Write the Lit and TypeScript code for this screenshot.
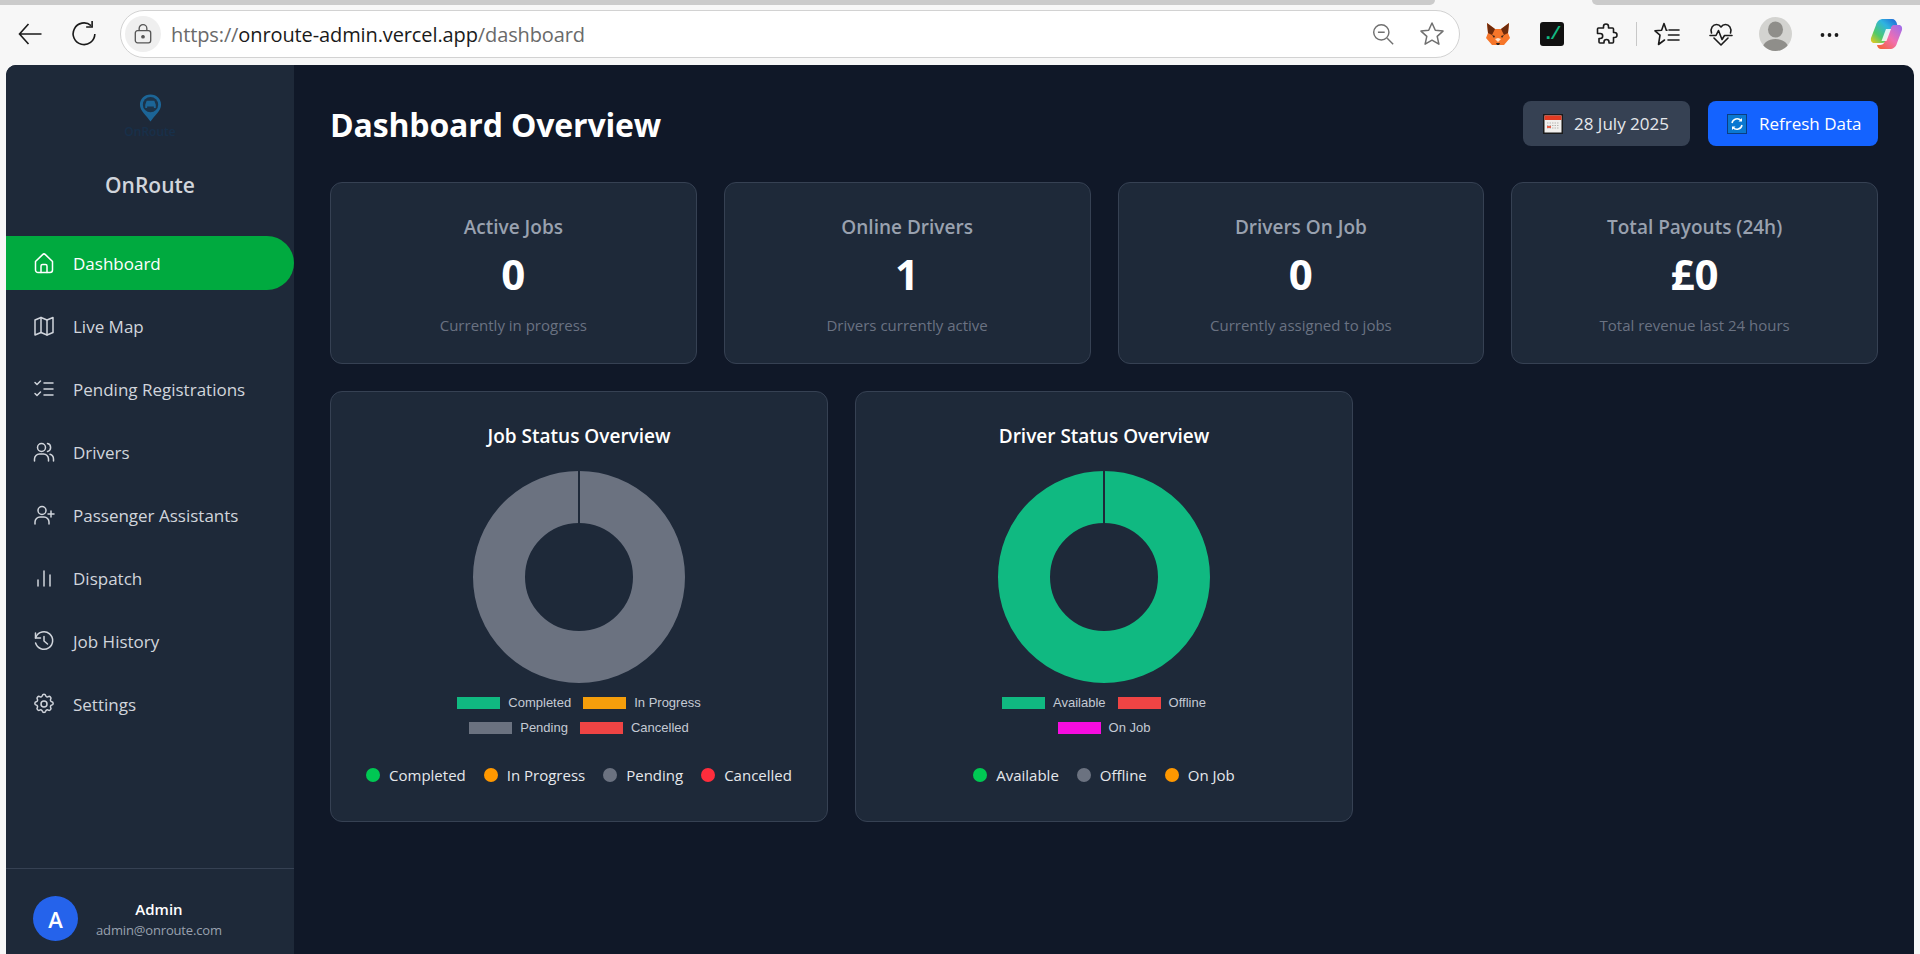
import { LitElement, html, css, svg } from "lit";
import { customElement } from "lit/decorators.js";

const I = (c: unknown, cls = "ni") => html`<svg class=${cls} viewBox="0 0 24 24" fill="none" stroke="currentColor" stroke-width="1.5" stroke-linecap="round" stroke-linejoin="round">${c}</svg>`;

const nav = [
  ["Dashboard", svg`<path d="M3.500 10.500 10.600 3.600a2 2 0 0 1 2.800 0l7.100 6.900V19a2.500 2.500 0 0 1-2.500 2.500H6A2.500 2.500 0 0 1 3.500 19z"/><path d="M9 21.500V15a1.500 1.500 0 0 1 1.500-1.500h3A1.500 1.500 0 0 1 15 15v6.500"/>`],
  ["Live Map", svg`<path d="M3 6l6-2.500 6 2.500 6-2.500v15l-6 2.500-6-2.500-6 2.500z"/><path d="M9 3.500v15M15 6v15"/>`],
  ["Pending Registrations", svg`<path d="M3 5.500l2 2 3.500-3.500M3 16.500l2 2 3.500-3.500M12 6h9M12 12h9M12 18h9"/>`],
  ["Drivers", svg`<circle cx="9.500" cy="7.500" r="4"/><path d="M2.500 21v-2a5 5 0 0 1 5-5h4a5 5 0 0 1 5 5v2"/><path d="M15.500 3.600a4 4 0 0 1 0 7.800M21.500 21v-2a5 5 0 0 0-3.500-4.700"/>`],
  ["Passenger Assistants", svg`<circle cx="10" cy="7.500" r="4"/><path d="M3 21v-2a5 5 0 0 1 5-5h4a5 5 0 0 1 5 5v2"/><path d="M19 8v6M16 11h6"/>`],
  ["Dispatch", svg`<path d="M6 20v-6M12 20V5M18 20v-11"/>`],
  ["Job History", svg`<path d="M3.500 4v5h5"/><path d="M3.600 14a8.700 8.700 0 1 0 .4-6L3.500 9"/><path d="M12 7.500V12l3.500 3"/>`],
  ["Settings", svg`<circle cx="12" cy="12" r="3"/><path d="M10.300 3.600c.4-1.800 3-1.800 3.400 0a1.700 1.700 0 0 0 2.600 1.100c1.500-1 3.400.9 2.400 2.400a1.700 1.700 0 0 0 1.100 2.600c1.800.4 1.800 3 0 3.400a1.700 1.700 0 0 0-1.100 2.600c1 1.500-.9 3.400-2.400 2.400a1.700 1.700 0 0 0-2.600 1.100c-.4 1.800-3 1.800-3.400 0a1.700 1.700 0 0 0-2.600-1.100c-1.500 1-3.400-.9-2.400-2.400a1.700 1.700 0 0 0-1.100-2.600c-1.800-.4-1.800-3 0-3.400a1.700 1.700 0 0 0 1.100-2.600c-1-1.500.9-3.400 2.400-2.400a1.700 1.700 0 0 0 2.600-1.100z"/>`],
] as const;

const stats = [
  ["Active Jobs", "0", "Currently in progress"],
  ["Online Drivers", "1", "Drivers currently active"],
  ["Drivers On Job", "0", "Currently assigned to jobs"],
  ["Total Payouts (24h)", "£0", "Total revenue last 24 hours"],
];

type Row = [string, string];
const charts: { title: string; color: string; rows: Row[][]; dots: Row[] }[] = [
  {
    title: "Job Status Overview",
    color: "#6b7280",
    rows: [
      [["Completed", "#10b981"], ["In Progress", "#f59e0b"]],
      [["Pending", "#6b7280"], ["Cancelled", "#ef4444"]],
    ],
    dots: [["Completed", "#00c853"], ["In Progress", "#ff9800"], ["Pending", "#6b7280"], ["Cancelled", "#ff2d3c"]],
  },
  {
    title: "Driver Status Overview",
    color: "#10b981",
    rows: [
      [["Available", "#10b981"], ["Offline", "#ef4444"]],
      [["On Job", "#f70ce0"]],
    ],
    dots: [["Available", "#00c853"], ["Offline", "#6b7280"], ["On Job", "#ff9800"]],
  },
];

@customElement("app-root")
export class AppRoot extends LitElement {
  static styles = css`
    :host { display: block; height: 954px; overflow: hidden; background: #f7f7f7; font-family: "Open Sans", "Noto Sans", sans-serif; }
    * { box-sizing: border-box; }
    .tabs { height: 5px; background: #f7f7f7; display: flex; justify-content: space-between; }
    .tabs i { display: block; height: 5px; background: #cbcbcb; }
    .tabs i:first-child { width: 1435px; border-bottom-right-radius: 5px; }
    .tabs i:last-child { width: 328px; border-bottom-left-radius: 5px; }
    .bar { height: 60px; display: flex; align-items: center; padding: 0 0 2px 0; color: #1b1b1b; }
    .tb { width: 24px; height: 24px; flex: none; }
    .back { margin-left: 18px; }
    .reload { margin-left: 29px; width: 26px; height: 26px; }
    .url { margin-left: 23px; width: 1340px; height: 48px; border: 1.5px solid #d2d2d2; border-radius: 24px; background: #fff; display: flex; align-items: center; padding: 0 14px 0 4px; flex: none; }
    .lock { width: 36px; height: 36px; border-radius: 50%; background: #efefef; display: flex; align-items: center; justify-content: center; color: #555; flex: none; }
    .lock svg { width: 22px; height: 22px; }
    .addr { margin-left: 10px; font-size: 20px; letter-spacing: -0.11px; color: #1a1a1a; white-space: nowrap; }
    .addr span { color: #6a6a6a; }
    .grow { flex: 1; }
    .zoom { width: 22px; height: 22px; color: #707070; flex: none; }
    .star { width: 26px; height: 26px; color: #707070; flex: none; margin-left: 25px; }
    .exts { display: flex; align-items: center; margin-left: 26px; }
    .fox { width: 24px; height: 24px; flex: none; }
    .term { width: 24px; height: 24px; margin-left: 30px; background: #111; border-radius: 3px; font: 700 19px "Liberation Mono", monospace; letter-spacing: -4px; display: flex; align-items: center; justify-content: center; padding-right: 4px; flex: none; }
    .term em { font-style: normal; color: #12b981; }
    .puzzle { margin-left: 30px; width: 24px; height: 24px; flex: none; }
    .sep { width: 1px; height: 24px; background: #c8c8c8; margin: 0 17px 0 18px; flex: none; }
    .fav { width: 26px; height: 24px; flex: none; }
    .heart { width: 24px; height: 24px; margin-left: 29px; flex: none; }
    .avatar { margin-left: 26px; width: 33px; height: 34px; border-radius: 50%; background: #d3d3d0; overflow: hidden; flex: none; }
    .avatar svg { width: 100%; height: 100%; display: block; }
    .dots { margin-left: 28px; width: 19px; height: 24px; flex: none; }
    .cop { margin-left: 31px; width: 33px; height: 32px; flex: none; }

    .app { margin-left: 6px; margin-right: 6px; height: 889px; background: #101828; border-radius: 10px 10px 0 0; overflow: hidden; display: flex; }
    aside { width: 288px; flex: none; background: #1e2939; display: flex; flex-direction: column; }
    .logo { height: 171px; display: flex; flex-direction: column; align-items: center; padding-top: 28px; flex: none; }
    .logo svg { width: 23px; height: 30px; display: block; flex: none; }
    .logoText { font-size: 12px; font-weight: 600; color: #18304a; margin-top: -1px; height: 19px; line-height: 19px; }
    .brand { margin-top: 30px; font-size: 21px; font-weight: 600; color: #d1d5dc; line-height: 28px; }
    nav { display: flex; flex-direction: column; gap: 9px; flex: 1; }
    .item { height: 54px; width: 288px; display: flex; align-items: center; padding-left: 26px; gap: 17px; color: #d1d5dc; font-size: 17px; border-radius: 0 27px 27px 0; }
    .item.on { background: #00aa3f; color: #fff; }
    .ni { width: 24px; height: 24px; flex: none; }
    .user { height: 86px; border-top: 1px solid #364153; display: flex; align-items: flex-start; padding: 27px 0 0 27px; gap: 18px; flex: none; }
    .uav { width: 45px; height: 45px; border-radius: 50%; background: #2563eb; color: #fff; font-size: 22px; font-weight: 600; display: flex; align-items: center; justify-content: center; flex: none; }
    .uinfo { display: flex; flex-direction: column; align-items: center; margin-top: 3px; }
    .uname { color: #fff; font-size: 15px; font-weight: 600; line-height: 20px; }
    .umail { color: #99a1af; font-size: 13px; line-height: 22px; letter-spacing: -0.15px; }

    main { flex: 1; padding: 36px 36px 0 36px; min-width: 0; }
    header { height: 45px; display: flex; align-items: center; margin-bottom: 36px; }
    h1 { margin: 0; padding-top: 2px; font-size: 32px; font-weight: 700; color: #fff; flex: 1; line-height: 45px; letter-spacing: -0.15px; }
    .btn { height: 45px; border-radius: 8px; display: flex; align-items: center; font-size: 17px; color: #e5e7eb; flex: none; }
    .date { width: 167px; background: #364153; padding-left: 20px; gap: 11px; }
    .refresh { width: 170px; background: #1463ff; color: #fff; margin-left: 18px; padding-left: 19px; gap: 12px; }
    .btn svg { width: 20px; height: 20px; flex: none; }
    .stats { display: grid; grid-template-columns: repeat(4, 1fr); gap: 27px; }
    .card { background: #1e2939; border: 1px solid #364153; border-radius: 12px; }
    .stat { height: 182px; display: flex; flex-direction: column; align-items: center; padding-top: 31px; }
    .sl { font-size: 19px; font-weight: 600; color: #99a1af; line-height: 26px; }
    .sv { font-size: 42px; font-weight: 700; color: #fff; line-height: 56px; margin-top: 6px; }
    .ss { font-size: 15px; color: #6a7282; line-height: 20px; margin-top: 13px; }
    .chartsRow { display: flex; gap: 27px; margin-top: 27px; }
    .chart { width: 498px; height: 431px; display: flex; flex-direction: column; align-items: center; padding-top: 31px; }
    h3 { margin: 0; font-size: 19px; font-weight: 600; color: #fff; line-height: 26px; }
    .donut { width: 212px; height: 212px; margin-top: 22px; display: block; flex: none; }
    .lg { margin-top: 10px; height: 50px; display: flex; flex-direction: column; align-items: center; gap: 6px; font-family: "Liberation Sans", Arial, sans-serif; font-size: 13px; color: #c4cad4; flex: none; }
    .lgr { display: flex; gap: 12px; height: 19px; align-items: center; }
    .lgi { display: flex; align-items: center; gap: 8px; }
    .lgi b { display: block; width: 43px; height: 12px; margin-top: 1px; }
    .dl { margin-top: 22px; display: flex; gap: 18px; font-size: 15px; color: #e5e7eb; line-height: 20px; }
    .dli { display: flex; align-items: center; gap: 9px; }
    .dli i { display: block; width: 14px; height: 14px; border-radius: 50%; }
  `;

  private donut(color: string) {
    return html`<svg class="donut" viewBox="0 0 212 212">
      <circle cx="106" cy="106" r="80" fill="none" stroke=${color} stroke-width="52"></circle>
      <path d="M106 0V52" stroke="#1e2939" stroke-width="2"></path>
    </svg>`;
  }

  private chrome() {
    return html`
      <div class="tabs"><i></i><i></i></div>
      <div class="bar">
        <svg class="tb back" viewBox="0 0 24 24" fill="none" stroke="currentColor" stroke-width="1.6"><path d="M23.500 12H1.500M10.500 2 1.500 12l9 10"/></svg>
        <svg class="tb reload" viewBox="0 0 24 24" fill="none" stroke="currentColor" stroke-width="1.500"><path d="M18.500 4.200A10 10 0 1 0 22 12"/><path d="M19.500 0v5.500H14"/></svg>
        <div class="url">
          <div class="lock"><svg viewBox="0 0 20 20" fill="none" stroke="currentColor" stroke-width="1.200"><rect x="3" y="7" width="14" height="11" rx="2"/><path d="M6.500 7V5a3.500 3.500 0 0 1 7 0v2"/><circle cx="10" cy="12.500" r="1.100" fill="currentColor"/></svg></div>
          <div class="addr"><span>https://</span>onroute-admin.vercel.app<span>/dashboard</span></div>
          <div class="grow"></div>
          <svg class="zoom" viewBox="0 0 26 26" fill="none" stroke="currentColor" stroke-width="1.700"><circle cx="11" cy="11" r="9"/><path d="M7 11h8M18 18l7 7"/></svg>
          <svg class="star" viewBox="0 0 26 26" fill="none" stroke="currentColor" stroke-width="1.500" stroke-linejoin="round"><path d="M13 2l3.300 7.300 7.700.8-5.800 5.300 1.700 7.800L13 19.200l-6.900 4 1.700-7.800L2 10.100l7.700-.8z"/></svg>
        </div>
        <div class="exts">
          <svg class="fox" viewBox="0 0 24 24"><path d="M1 1l8 6h6l8-6-1 10 2 5-6 7H6l-6-7 2-5z" fill="#f6762a"/><path d="M1 1l8 6-3 6-4-2zM23 1l-8 6 3 6 4-2z" fill="#6d2b0c"/><path d="M9 17l3 3 3-3-3-1z" fill="#fbe3d0"/><path d="M10 21h4l-1 2h-2z" fill="#33251c"/><path d="M6 13l3 1-1 2zM18 13l-3 1 1 2z" fill="#33251c"/></svg>
          <div class="term"><em>./</em></div>
          <svg class="puzzle" viewBox="0 0 24 24" fill="none" stroke="#1b1b1b" stroke-width="1.600" stroke-linejoin="round"><path d="M9.500 4.500a2.500 2.500 0 0 1 5 0V6h4a1 1 0 0 1 1 1v3.500h1a2.500 2.500 0 0 1 0 5h-1V20a1 1 0 0 1-1 1h-3.500v-1a2.500 2.500 0 0 0-5 0v1H6a1 1 0 0 1-1-1v-3.500h1.200a2.500 2.500 0 0 0 0-5H3.500V7a1 1 0 0 1 1-1h5z"/></svg>
          <div class="sep"></div>
          <svg class="fav" viewBox="0 0 26 24" fill="none" stroke="#1b1b1b" stroke-width="1.600" stroke-linejoin="round" stroke-linecap="round"><path d="M13 8.200h-.7L10 1.500 7.600 8.200 1 8.800l5 4.400-1.500 9.300 6-4.500"/><path d="M15 8h10M14.500 13H25M14 18h11"/></svg>
          <svg class="heart" viewBox="0 0 24 24" fill="none" stroke="#1b1b1b" stroke-width="1.600" stroke-linejoin="round" stroke-linecap="round"><path d="M2.500 11C1 6 4 2.500 7.500 2.500c2 0 3.500 1 4.500 2.500 1-1.500 2.500-2.500 4.500-2.500C20 2.500 23 6 21.500 11"/><path d="M5 16l7 7 7-7"/><path d="M1 13.500h6l2.500-5 3.500 9 2.500-4H23"/></svg>
          <div class="avatar"><svg viewBox="0 0 33 34"><ellipse cx="16.500" cy="12.500" rx="7.500" ry="8" fill="#8f8e8a"/><path d="M3 34c0-8 6-12 13.500-12S30 26 30 34z" fill="#8f8e8a"/></svg></div>
          <svg class="dots" viewBox="0 0 19 24" fill="#1b1b1b"><circle cx="2.500" cy="13" r="1.900"/><circle cx="9.500" cy="13" r="1.900"/><circle cx="16.500" cy="13" r="1.900"/></svg>
          <svg class="cop" viewBox="0 0 33 32">
            <defs>
              <linearGradient id="c1" x1="1" y1="0" x2="0" y2="1"><stop offset="0" stop-color="#1f5fd6"/><stop offset=".35" stop-color="#2fb4e0"/><stop offset=".7" stop-color="#4fc96a"/><stop offset="1" stop-color="#f5c918"/></linearGradient>
              <linearGradient id="c2" x1="1" y1="0" x2="0" y2="1"><stop offset="0" stop-color="#9a6cf0"/><stop offset=".5" stop-color="#f06fb0"/><stop offset="1" stop-color="#f5622a"/></linearGradient>
            </defs>
            <path d="M13 1h9c2.500 0 4.500 2 5 5l.5 2H25c-2 0-3.500.5-4 3l-5.500 12c-.5 2-3 2-5 2H4c-2.500 0-3.500-2.500-3-5L6 7c1-4 4-6 7-6z" fill="url(#c1)"/>
            <path d="M20 31h-9c-2 0-3.500-1.500-4-4h3c2 0 4-1 4.500-3L21 10c.5-2.500 2-3 4-3h4c2.500 0 3.500 2.500 3 5l-5 13c-1 4-4 6-7 6z" fill="url(#c2)"/>
            <path d="M16 11h5l-4.500 12h-5z" fill="#fff" opacity=".85"/>
          </svg>
        </div>
      </div>`;
  }

  render() {
    return html`
      ${this.chrome()}
      <div class="app">
        <aside>
          <div class="logo">
            <svg viewBox="0 0 24 30"><path d="M12 1C5.400 1 1 5.800 1 11.500 1 18 8 23 12 29c4-6 11-11 11-17.500C23 5.800 18.600 1 12 1z" fill="#1c6597"/><circle cx="12" cy="11.500" r="8" fill="#1c3349"/><path d="M6.500 15v-3.500l1.500-4h8l1.500 4V15h-2v-1.500h-7V15z" fill="#1c6597"/></svg>
            <div class="logoText">OnRoute</div>
            <div class="brand">OnRoute</div>
          </div>
          <nav>
            ${nav.map(([t, p], i) => html`<div class="item ${i === 0 ? "on" : ""}">${I(p)}<span>${t}</span></div>`)}
          </nav>
          <div class="user">
            <div class="uav">A</div>
            <div class="uinfo"><div class="uname">Admin</div><div class="umail">admin@onroute.com</div></div>
          </div>
        </aside>
        <main>
          <header>
            <h1>Dashboard Overview</h1>
            <div class="btn date">
              <svg viewBox="0 0 20 20"><rect width="20" height="20" fill="#1a1a1a"/><rect x="1.500" y="1.500" width="17" height="17" fill="#f2f0ee"/><rect x="1.500" y="1.500" width="17" height="4.500" fill="#e23b22"/><path d="M4 9h12M4 11.500h12M4 14h12" stroke="#b9b6b2" stroke-width="1" stroke-dasharray="1.500 1"/><rect x="4" y="12" width="4" height="2" fill="#e8604a"/></svg>
              <span>28 July 2025</span>
            </div>
            <div class="btn refresh">
              <svg viewBox="0 0 20 20" fill="none"><rect width="20" height="20" fill="#0b3d82"/><rect x="1" y="1" width="18" height="18" fill="#0a78d1"/><path d="M5 9a5.200 5.200 0 0 1 9-2.500M15 11a5.200 5.200 0 0 1-9 2.500" stroke="#fff" stroke-width="1.500"/><path d="M15 4v3.500h-3.500M5 16v-3.500h3.500" fill="#fff"/></svg>
              <span>Refresh Data</span>
            </div>
          </header>
          <section class="stats">
            ${stats.map(([a, b, c]) => html`<div class="card stat"><div class="sl">${a}</div><div class="sv">${b}</div><div class="ss">${c}</div></div>`)}
          </section>
          <section class="chartsRow">
            ${charts.map((c) => html`
              <div class="card chart">
                <h3>${c.title}</h3>
                ${this.donut(c.color)}
                <div class="lg">
                  ${c.rows.map((r) => html`<div class="lgr">${r.map(([t, col]) => html`<div class="lgi"><b style="background:${col}"></b><span>${t}</span></div>`)}</div>`)}
                </div>
                <div class="dl">
                  ${c.dots.map(([t, col]) => html`<div class="dli"><i style="background:${col}"></i><span>${t}</span></div>`)}
                </div>
              </div>`)}
          </section>
        </main>
      </div>`;
  }
}
